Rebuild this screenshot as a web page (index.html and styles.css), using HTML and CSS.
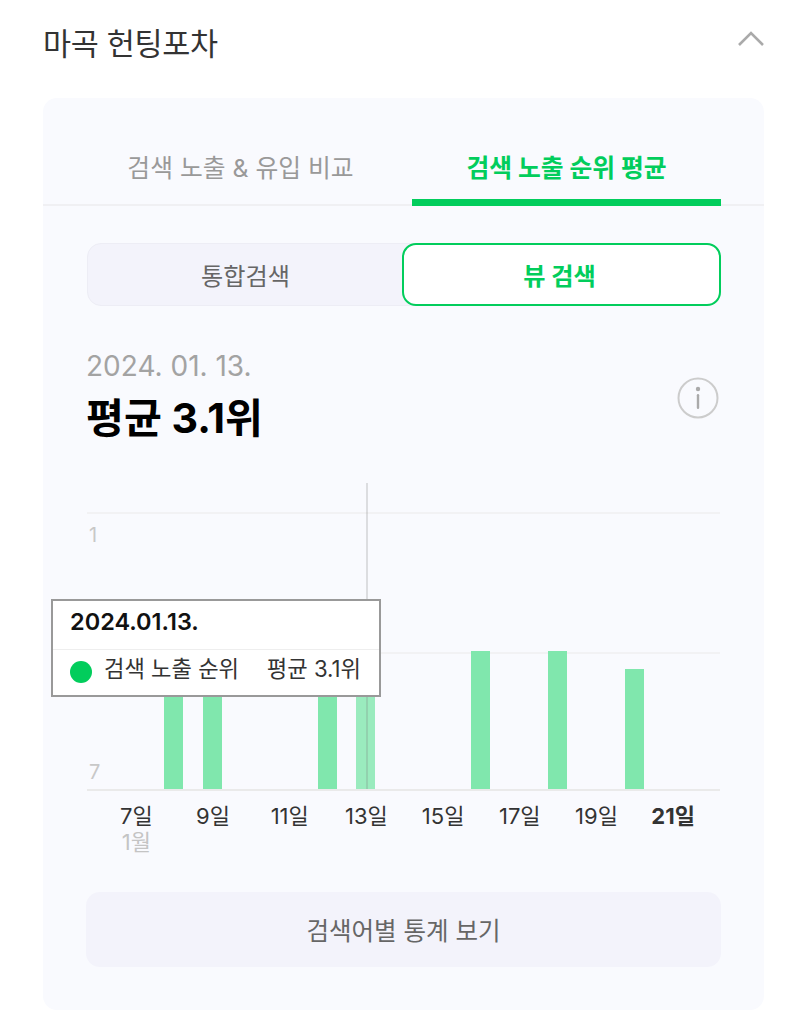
FILE: index.html
```html
<!DOCTYPE html>
<html lang="ko">
<head>
<meta charset="utf-8">
<title>마곡 헌팅포차</title>
<link rel="stylesheet" href="styles.css">
</head>
<body>
<main class="page">
  <header class="head">
    <h1 class="title">마곡 헌팅포차</h1>
    <svg class="chevron" width="28" height="16" viewBox="0 0 28 16"><path d="M2 15 L14 3 L26 15" fill="none" stroke="#aaaaaa" stroke-width="2.6"/></svg>
  </header>
  <section class="card">
    <nav class="tabs">
      <div class="tab">검색 노출 &amp; 유입 비교</div>
      <div class="tab tab-on">검색 노출 순위 평균</div>
    </nav>
    <div class="body">
      <div class="seg">
        <div class="seg-item">통합검색</div>
        <div class="seg-item seg-on">뷰 검색</div>
      </div>
      <div class="summary">
        <div>
          <div class="date">2024. 01. 13.</div>
          <div class="avg">평균 3.1위</div>
        </div>
        <svg class="info" width="42" height="42" viewBox="0 0 42 42">
          <circle cx="21" cy="21" r="19.5" fill="none" stroke="#cccccc" stroke-width="2"/>
          <circle cx="21" cy="12" r="2.2" fill="#aaaaaa"/>
          <rect x="19.8" y="17" width="2.4" height="15" rx="1.2" fill="#aaaaaa"/>
        </svg>
      </div>
      <div class="chart">
        <div class="plot">
          <div class="grid grid-a"></div>
          <div class="grid grid-b"></div>
          <span class="axis axis-a">1</span>
          <span class="axis axis-b">7</span>
          <div class="bars">
            <i></i>
            <i class="bar" style="height:129px"></i>
            <i class="bar" style="height:129px"></i>
            <i></i><i></i>
            <i class="bar" style="height:129px"></i>
            <i class="bar bar-now" style="height:129px"></i>
            <i></i><i></i>
            <i class="bar" style="height:138px"></i>
            <i></i>
            <i class="bar" style="height:138px"></i>
            <i></i>
            <i class="bar" style="height:120px"></i>
            <i></i>
          </div>
          <div class="cursor"></div>
          <div class="tip">
            <div class="tip-date">2024.01.13.</div>
            <div class="tip-row">
              <span class="dot"></span>
              <span class="tip-name">검색 노출 순위</span>
              <span class="tip-val">평균 3.1위</span>
            </div>
          </div>
        </div>
        <div class="labels">
          <span class="lab"><span>7일<small>1월</small></span></span>
          <span class="lab"><span>9일</span></span>
          <span class="lab"><span>11일</span></span>
          <span class="lab"><span>13일</span></span>
          <span class="lab"><span>15일</span></span>
          <span class="lab"><span>17일</span></span>
          <span class="lab"><span>19일</span></span>
          <span class="lab lab-now"><span>21일</span></span>
        </div>
      </div>
      <button class="more" type="button">검색어별 통계 보기</button>
    </div>
  </section>
</main>
</body>
</html>
```
FILE: styles.css
```css
* { box-sizing: border-box; }
html, body { margin: 0; background: #fff; }
body {
  font-family: "Inter", "Noto Sans CJK KR", sans-serif;
  color: #333;
  height: 1024px;
  overflow: hidden;
}
.page { padding: 0 43px; }
.head {
  height: 98px;
  padding-bottom: 14px;
  display: flex;
  align-items: center;
  justify-content: space-between;
}
.title {
  margin: 0;
  font-size: 30.5px;
  font-weight: 400;
  color: #333;
  letter-spacing: -0.3px;
}
.chevron { margin-right: -1px; margin-top: -8px; }
.card {
  height: 912px;
  background: #f9fafe;
  border-radius: 14px;
}
.tabs {
  display: grid;
  grid-template-columns: 1fr 1fr;
  column-gap: 17px;
  height: 108px;
  padding: 0 43px;
  border-bottom: 2px solid #f0f0f3;
}
.tab {
  height: 108px;
  padding-top: 50px;
  text-align: center;
  font-size: 24.8px;
  line-height: 40px;
  color: #999;
}
.tab-on {
  color: #02cd5c;
  font-weight: 700;
  border-bottom: 7px solid #02cd5c;
}
.body { padding: 37px 43px 0 44px; }
.seg {
  display: grid;
  grid-template-columns: 315px 1fr;
  height: 63px;
  background: #f3f3fb;
  border: 1px solid #ededf5;
  border-radius: 14px;
}
.seg-item {
  display: flex;
  align-items: center;
  justify-content: center;
  font-size: 24.2px;
  color: #666;
}
.seg-on {
  margin: -1px;
  padding-right: 4px;
  background: #fff;
  border: 2px solid #02cd5c;
  border-radius: 14px;
  color: #02cd5c;
  font-weight: 700;
}
.summary {
  display: flex;
  justify-content: space-between;
  align-items: flex-start;
  margin-top: 41px;
  height: 104px;
}
.date { font-size: 28px; line-height: 38px; color: #a3a3a3; margin-left: -1px; }
.avg { font-size: 41.2px; line-height: 66px; font-weight: 700; color: #000; margin-left: -1px; }
.info { margin: 30px 2px 0 0; }
.chart { margin-top: 32px; }
.plot {
  position: relative;
  height: 308px;
  border-bottom: 2px solid #eaeaea;
  margin-right: 1px;
}
.grid { position: absolute; left: 0; right: 0; height: 2px; background: #f2f2f4; }
.grid-a { top: 29px; }
.grid-b { top: 169px; }
.axis { position: absolute; left: 2px; font-size: 20px; line-height: 24px; color: #c8c8c8; }
.axis-a { top: 40px; }
.axis-b { top: 277px; }
.bars {
  position: absolute;
  inset: 0;
  padding-left: 29.4px;
  display: grid;
  grid-template-columns: repeat(15, 38.35px);
  align-items: end;
}
.bar {
  display: block;
  width: 19px;
  justify-self: center;
  background: #80e7ad;
}
.bar-now { background: #9aebbe; }
.cursor {
  position: absolute;
  left: 279px;
  top: 0;
  bottom: 0;
  width: 2px;
  background: rgba(120, 120, 120, .22);
}
.tip {
  position: absolute;
  left: -36px;
  top: 116px;
  width: 330px;
  height: 98px;
  background: #fff;
  border: 2px solid #999;
}
.tip-date {
  height: 49px;
  padding: 3px 0 0 17px;
  font-size: 23.5px;
  line-height: 36px;
  font-weight: 600;
  color: #111;
  border-bottom: 1px solid #eeeeee;
}
.tip-row {
  display: flex;
  align-items: center;
  height: 45px;
  padding: 0 18px 2px 17px;
  font-size: 22.2px;
  color: #333;
}
.dot { width: 22px; height: 22px; border-radius: 50%; background: #02cd5c; margin-right: 12px; flex: none; }
.tip-name, .tip-val { margin-bottom: 9px; }
.tip-val { margin-left: auto; }
.labels {
  display: grid;
  grid-template-columns: repeat(8, 76.7px);
  padding-left: 11px;
  margin-top: 12px;
  height: 89px;
}
.lab {
  display: flex;
  justify-content: center;
  font-size: 22px;
  line-height: 26px;
  color: #333;
  white-space: nowrap;
}
.lab-now { font-weight: 700; }
.lab small {
  display: block;
  text-align: center;
  font-size: 22px;
  color: #c4c4c4;
}
.more {
  display: block;
  width: 635px;
  height: 75px;
  margin-left: -1px;
  border: 0;
  border-radius: 14px;
  background: #f3f3fb;
  font: inherit;
  font-size: 24.5px;
  color: #666;
}
```
